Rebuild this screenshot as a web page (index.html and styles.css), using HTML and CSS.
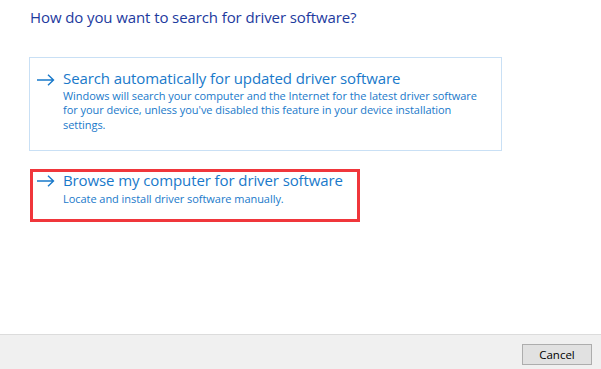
FILE: index.html
```html
<!DOCTYPE html>
<html lang="en">
<head>
    <meta charset="UTF-8">
    <title>Update Drivers</title>
    <link rel="stylesheet" href="styles.css">
</head>
<body>
    <div class="dialog">
        <div class="content">
            <h1 class="title">How do you want to search for driver software?</h1>

            <div class="option option-auto">
                <svg class="arrow" width="18" height="12" viewBox="0 0 18 12">
                    <path d="M0 6 H16.5 M11 0.7 L16.5 6 L11 11.3" fill="none" stroke="#1979ca" stroke-width="1.4"/>
                </svg>
                <div class="option-text">
                    <div class="option-head">Search automatically for updated driver software</div>
                    <div class="option-desc">Windows will search your computer and the Internet for the latest driver software for your device, unless you've disabled this feature in your device installation settings.</div>
                </div>
            </div>

            <div class="option option-browse">
                <svg class="arrow" width="18" height="12" viewBox="0 0 18 12">
                    <path d="M0 6 H16.5 M11 0.7 L16.5 6 L11 11.3" fill="none" stroke="#1979ca" stroke-width="1.4"/>
                </svg>
                <div class="option-text">
                    <div class="option-head">Browse my computer for driver software</div>
                    <div class="option-desc">Locate and install driver software manually.</div>
                </div>
            </div>
        </div>

        <div class="footer">
            <button class="btn">Cancel</button>
        </div>
    </div>
</body>
</html>
```

FILE: styles.css
```css
body {
    margin: 0;
    background: #fff;
    font-family: "Open Sans", "Noto Sans", sans-serif;
}
.dialog {
    width: 601px;
    height: 369px;
    display: flex;
    flex-direction: column;
}
.content {
    flex-grow: 1;
    padding: 6px 0 0 29px;
}
.title {
    margin: 0 0 29px 1px;
    font-size: 15px;
    letter-spacing: -0.1px;
    font-weight: normal;
    color: #1d3a9e;
    line-height: 22px;
}
.option {
    display: flex;
    align-items: flex-start;
    color: #1979ca;
}
.option .arrow {
    flex-shrink: 0;
    margin: 7px 8px 0 0;
}
.option-text {
    flex-grow: 1;
}
.option-auto {
    width: 457px;
    height: 79px;
    padding: 9px 7px 4px 7px;
    border: 1px solid #c9e0f5;
}
.option-browse {
    width: 320px;
    height: 47px;
    margin-top: 18px;
    margin-left: 1px;
    padding: 0 0 0 4px;
    border: 3px solid #f0363b;
}
.option-browse .arrow {
    margin-top: 3px;
}
.option-browse .option-head {
    line-height: 17px;
    white-space: nowrap;
}
.option-browse .option-desc {
    margin-top: 3px;
}
.option-head {
    font-size: 15px;
    letter-spacing: -0.1px;
    line-height: 22px;
}
.option-desc {
    font-size: 11px;
    letter-spacing: -0.05px;
    line-height: 14.3px;
}
.footer {
    height: 34px;
    border-top: 1px solid #dcdcdc;
    background: #f0f0f0;
    display: flex;
    justify-content: flex-end;
    align-items: flex-start;
    padding-right: 9px;
}
.btn {
    margin-top: 9px;
    width: 70px;
    height: 21px;
    padding: 0;
    border: 1px solid #adadad;
    background: #e1e1e1;
    font-family: "Open Sans", "Noto Sans", sans-serif;
    font-size: 11.5px;
    color: #000;
}
```
